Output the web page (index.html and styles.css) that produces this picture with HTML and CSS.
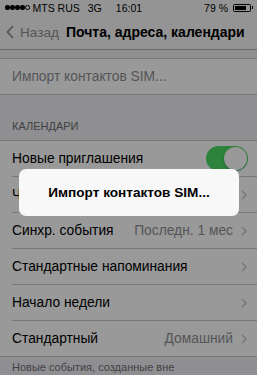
FILE: index.html
```html
<!DOCTYPE html>
<html lang="ru">
<head>
<meta charset="utf-8">
<link rel="stylesheet" href="styles.css">
</head>
<body>
<div class="screen">
  <div class="status">
    <div class="st-left">
      <span class="dots"><i></i><i></i><i></i><i></i><i class="empty"></i></span>
      <span class="carrier">MTS RUS</span><span class="net">3G</span>
    </div>
    <div class="st-time">16:01</div>
    <div class="st-right">
      <span>79 %</span>
      <span class="battery"><span class="level"></span></span><span class="nub"></span>
    </div>
  </div>
  <div class="nav">
    <div class="back">
      <svg width="8" height="14" viewBox="0 0 8 14"><path d="M7 1 L1.5 7 L7 13" fill="none" stroke="#8e8e93" stroke-width="1.8"/></svg>
      <span>Назад</span>
    </div>
    <div class="title">Почта, адреса, календари</div>
  </div>
  <div class="gap-top"></div>
  <div class="group">
    <div class="row"><span class="label disabled">Импорт контактов SIM...</span></div>
  </div>
  <div class="header">КАЛЕНДАРИ</div>
  <div class="group">
    <div class="row">
      <span class="label">Новые приглашения</span>
      <span class="toggle"><span class="knob"></span></span>
    </div>
    <div class="row">
      <span class="label">Часовой пояс</span>
      <span class="value"></span>
      <svg class="chev" width="6" height="10" viewBox="0 0 6 10"><path d="M1 1 L5 5 L1 9" fill="none" stroke="#c7c7cc" stroke-width="1.5"/></svg>
    </div>
    <div class="row">
      <span class="label">Синхр. события</span>
      <span class="value">Последн. 1 мес</span>
      <svg class="chev" width="6" height="10" viewBox="0 0 6 10"><path d="M1 1 L5 5 L1 9" fill="none" stroke="#c7c7cc" stroke-width="1.5"/></svg>
    </div>
    <div class="row">
      <span class="label">Стандартные напоминания</span>
      <span class="value"></span>
      <svg class="chev" width="6" height="10" viewBox="0 0 6 10"><path d="M1 1 L5 5 L1 9" fill="none" stroke="#c7c7cc" stroke-width="1.5"/></svg>
    </div>
    <div class="row">
      <span class="label">Начало недели</span>
      <span class="value"></span>
      <svg class="chev" width="6" height="10" viewBox="0 0 6 10"><path d="M1 1 L5 5 L1 9" fill="none" stroke="#c7c7cc" stroke-width="1.5"/></svg>
    </div>
    <div class="row">
      <span class="label">Стандартный</span>
      <span class="value">Домашний</span>
      <svg class="chev" width="6" height="10" viewBox="0 0 6 10"><path d="M1 1 L5 5 L1 9" fill="none" stroke="#c7c7cc" stroke-width="1.5"/></svg>
    </div>
  </div>
  <div class="footer">Новые события, созданные вне</div>

  <div class="dim"></div>
  <div class="alert">Импорт контактов SIM...</div>
</div>
</body>
</html>
```
FILE: styles.css
```css
* { box-sizing: border-box; }
html, body { margin: 0; padding: 0; }
body {
  font-family: "Liberation Sans", Arial, sans-serif;
  background: #efeff4;
  width: 257px;
  height: 375px;
  overflow: hidden;
}
.screen {
  position: relative;
  width: 257px;
  height: 375px;
  overflow: hidden;
  background: #efeff4;
}
.status {
  height: 15px;
  display: grid;
  grid-template-columns: 1fr auto 1fr;
  align-items: center;
  padding: 0 4px 0 5px;
  font-size: 10.5px;
  color: #000;
  background: #f7f7f7;
  white-space: nowrap;
}
.st-left { display: flex; align-items: center; }
.carrier { margin-left: 3px; }
.net { margin-left: 8px; }
.dots { display: flex; gap: 0.5px; }
.dots i {
  display: block; width: 4.5px; height: 4.5px; border-radius: 50%;
  background: #000;
}
.dots i.empty { background: transparent; border: 1px solid #000; }
.st-time { font-size: 10.5px; }
.st-right { display: flex; align-items: center; justify-content: flex-end; }
.battery {
  margin-left: 5px;
  width: 18px; height: 8px;
  border: 1px solid #000;
  border-radius: 1.5px;
  padding: 1px;
  display: flex;
}
.level { width: 76%; background: #000; }
.nub { width: 1.5px; height: 3px; background: #000; margin-left: 0.5px; }
.nav {
  height: 35px;
  display: flex;
  align-items: center;
  padding: 0 0 0 6px;
  background: #f7f7f7;
  border-bottom: 1px solid #b2b2b2;
}
.back {
  display: flex;
  align-items: center;
  gap: 6px;
  color: #8e8e93;
  font-size: 13.6px;
}
.title {
  margin-left: 7px;
  font-weight: bold;
  font-size: 14px;
  color: #000;
  white-space: nowrap;
}
.gap-top { height: 8px; }
.group {
  background: #fff;
  border-top: 1px solid #c8c7cc;
  border-bottom: 1px solid #c8c7cc;
}
.row {
  height: 36px;
  display: flex;
  align-items: center;
  margin-left: 12px;
  padding-right: 10px;
  border-bottom: 1px solid #c8c7cc;
  font-size: 13.8px;
  color: #000;
}
.row:last-child { border-bottom: none; height: 35px; }
.label { flex: 1; white-space: nowrap; }
.label.disabled { color: #8e8e93; }
.value { color: #8e8e93; margin-right: 8px; white-space: nowrap; }
.chev { display: block; }
.header {
  height: 45px;
  padding: 0 12px 8px;
  display: flex;
  align-items: flex-end;
  font-size: 11px;
  color: #6d6d72;
}
.toggle {
  position: relative;
  width: 42px; height: 25px;
  border-radius: 13px;
  background: #4cd964;
  margin-right: -1px;
}
.knob {
  position: absolute;
  right: 1px; top: 1px;
  width: 23px; height: 23px;
  border-radius: 50%;
  background: #fff;
  box-shadow: 0 1px 2px rgba(0,0,0,0.3);
}
.footer {
  padding: 4px 12px;
  font-size: 11px;
  color: #6d6d72;
  white-space: nowrap;
}
.dim {
  position: absolute;
  inset: 0;
  background: rgba(0,0,0,0.4);
}
.alert {
  position: absolute;
  left: 19px; top: 169px;
  width: 220px; height: 47px;
  border-radius: 7px;
  background: #f8f8f8;
  display: flex;
  align-items: center;
  justify-content: center;
  font-weight: bold;
  font-size: 13.6px;
  color: #000;
}
```
